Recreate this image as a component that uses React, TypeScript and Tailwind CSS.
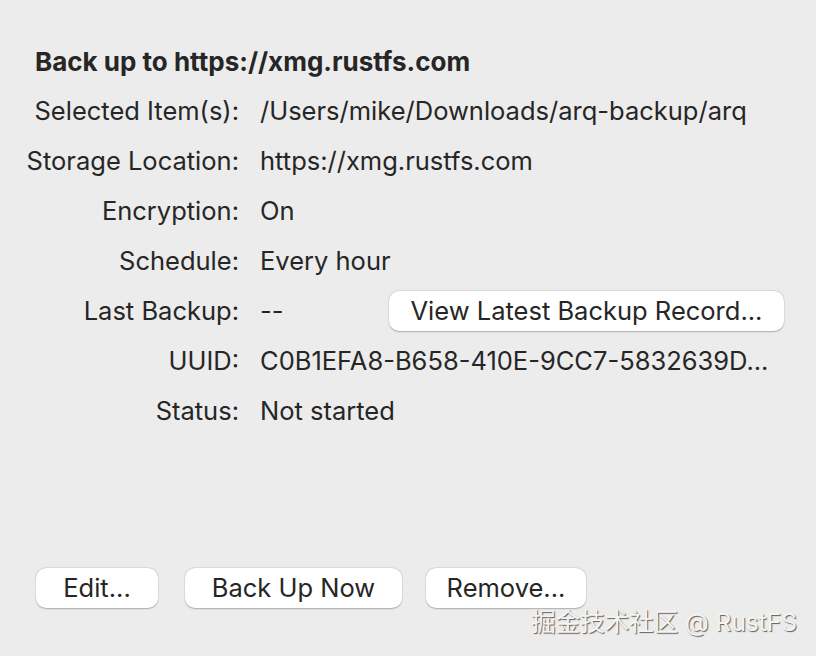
import React from "react";

const rows: { label: string; value: React.ReactNode }[] = [
  { label: "Selected Item(s):", value: "/Users/mike/Downloads/arq-backup/arq" },
  { label: "Storage Location:", value: "https://xmg.rustfs.com" },
  { label: "Encryption:", value: "On" },
  { label: "Schedule:", value: "Every hour" },
  {
    label: "Last Backup:",
    value: (
      <div className="flex items-center">
        <span className="w-[129px]">--</span>
        <MacButton className="w-[395px]">View Latest Backup Record...</MacButton>
      </div>
    ),
  },
  { label: "UUID:", value: "C0B1EFA8-B658-410E-9CC7-5832639D..." },
  { label: "Status:", value: "Not started" },
];

function MacButton({
  children,
  className = "",
}: {
  children: React.ReactNode;
  className?: string;
}) {
  return (
    <button
      className={`h-[40px] rounded-[10px] bg-white text-[25.5px] text-[#262626] shadow-[0_0.5px_1.5px_rgba(0,0,0,0.25),0_0_0_0.5px_rgba(0,0,0,0.06)] ${className}`}
    >
      {children}
    </button>
  );
}

export default function App() {
  return (
    <div
      className="relative h-[656px] w-[816px] bg-[#ececec] text-[#262626]"
      style={{ fontFamily: "Inter, 'Noto Sans', sans-serif" }}
    >
      <div className="pt-[36px]">
        <div className="flex h-[50px] items-center pl-[35px] text-[26px] font-bold">
          Back up to https://xmg.rustfs.com
        </div>
        <div className="grid grid-cols-[239px_1fr] gap-x-[21px]">
          {rows.map((r) => (
            <React.Fragment key={r.label}>
              <div className="flex h-[50px] items-center justify-end text-[25.5px]">
                {r.label}
              </div>
              <div className="flex h-[50px] items-center whitespace-nowrap text-[25.5px]">
                {r.value}
              </div>
            </React.Fragment>
          ))}
        </div>
      </div>

      <div className="mt-[132px] flex pl-[36px]">
        <MacButton className="w-[122px]">Edit...</MacButton>
        <MacButton className="ml-[27px] w-[217px]">Back Up Now</MacButton>
        <MacButton className="ml-[24px] w-[160px]">Remove...</MacButton>
      </div>

      <div
        className="absolute right-[19px] top-[604px] text-[24.5px] text-[#f4f4f4] [text-shadow:1px_1px_1px_rgba(0,0,0,0.6)]"
        style={{ fontFamily: "Inter, 'Noto Sans CJK SC', sans-serif" }}
      >
        掘金技术社区 @ RustFS
      </div>
    </div>
  );
}
